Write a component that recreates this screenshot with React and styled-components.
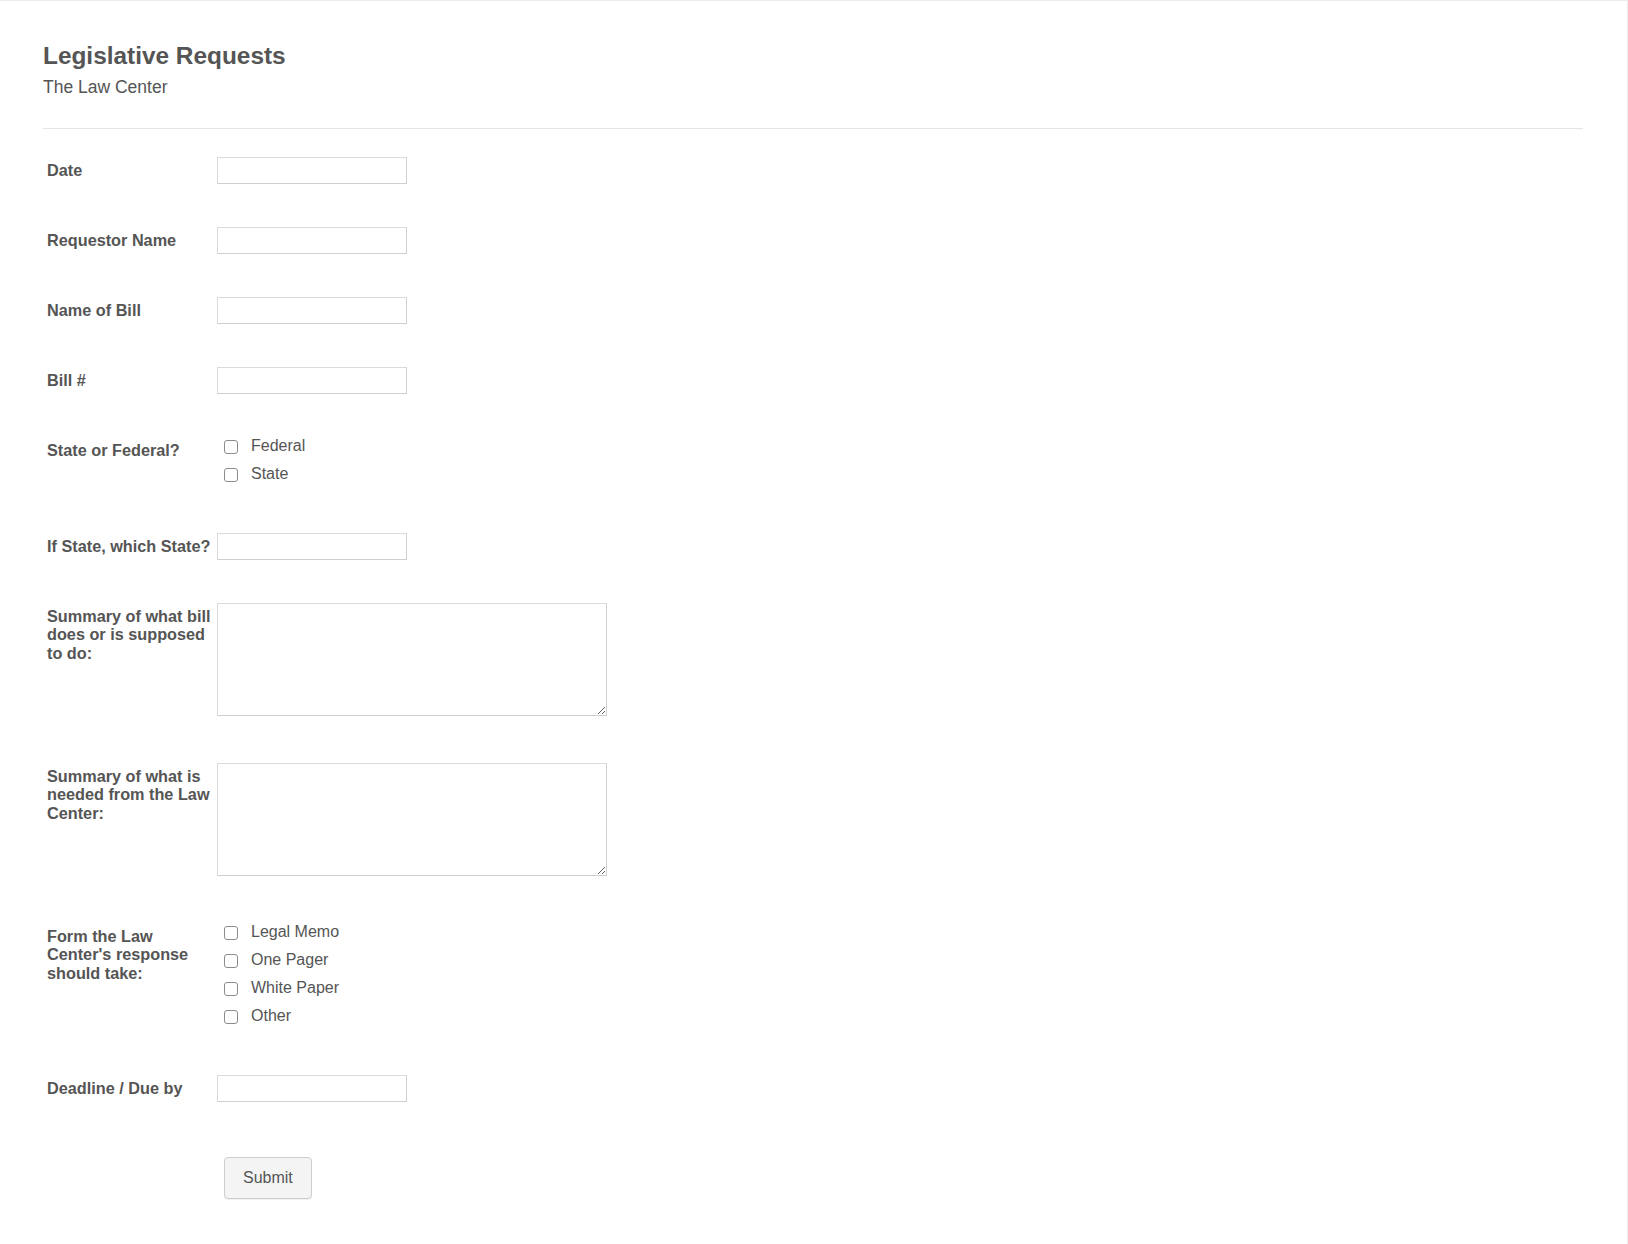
import React from 'react';
import styled, { createGlobalStyle } from 'styled-components';

const GlobalStyle = createGlobalStyle`
body{
    margin: 0;
    background: #fff;
    color: #555;
    font-family: "Liberation Sans", Arial, sans-serif;
}
`;

const fields = [
    { id: 'date', label: 'Date', kind: 'input' },
    { id: 'requestor', label: 'Requestor Name', kind: 'input' },
    { id: 'bill', label: 'Name of Bill', kind: 'input' },
    { id: 'billNo', label: 'Bill #', kind: 'input' },
    { id: 'scope', label: 'State or Federal?', kind: 'checks', options: ['Federal', 'State'] },
    { id: 'state', label: 'If State, which State?', kind: 'input' },
    { id: 'summary', label: 'Summary of what bill does or is supposed to do:', kind: 'textarea' },
    { id: 'needed', label: 'Summary of what is needed from the Law Center:', kind: 'textarea' },
    { id: 'form', label: "Form the Law Center's response should take:", kind: 'checks', options: ['Legal Memo', 'One Pager', 'White Paper', 'Other'] },
    { id: 'deadline', label: 'Deadline / Due by', kind: 'input' },
];

export default function App() {
    const renderControl = (f) => {
        if (f.kind === 'textarea') return <TextArea id={f.id} />;
        if (f.kind === 'checks') {
            return (
                <CheckList>
                    {f.options.map((opt) => (
                        <CheckOption key={opt}>
                            <CheckBox type="checkbox" />
                            <span>{opt}</span>
                        </CheckOption>
                    ))}
                </CheckList>
            );
        }
        return <TextInput id={f.id} type="text" />;
    };

    return (
        <>
            <GlobalStyle />
            <Page>
                <FormWrap>
                    <Header>
                        <h2>Legislative Requests</h2>
                        <div className="sub">The Law Center</div>
                    </Header>
                    <FieldList>
                        {fields.map((f) => (
                            <Row key={f.id}>
                                <Label htmlFor={f.id}>{f.label}</Label>
                                {renderControl(f)}
                            </Row>
                        ))}
                        <SubmitRow>
                            <SubmitButton type="button">Submit</SubmitButton>
                        </SubmitRow>
                    </FieldList>
                </FormWrap>
            </Page>
        </>
    );
}

const Page = styled.div`
min-height: 100vh;
box-sizing: border-box;
border-top: 1px solid #ebebeb;
border-right: 1px solid #ebebeb;
`;

const FormWrap = styled.div`
padding: 41px 44px 40px 43px;
`;

const Header = styled.div`
padding-bottom: 30px;
border-bottom: 1px solid #e4e4e4;
h2{
    margin: 0;
    font-size: 24.4px;
    font-weight: bold;
    line-height: normal;
    color: #555;
}
.sub{
    margin-top: 7px;
    font-size: 17.5px;
    line-height: normal;
    color: #555;
}
`;

const FieldList = styled.div`
padding-top: 28px;
`;

const Row = styled.div`
display: flex;
align-items: flex-start;
padding-left: 4px;
margin-bottom: 43px;
`;

const Label = styled.label`
width: 170px;
flex-shrink: 0;
padding-top: 4px;
font-size: 16.25px;
font-weight: bold;
line-height: 18.4px;
color: #555;
`;

const TextInput = styled.input`
box-sizing: border-box;
width: 190px;
height: 27px;
margin: 0;
border: 1px solid #cfcfcf;
border-top-color: #dadada;
border-left-color: #dadada;
background: #fff;
font: 15px "Liberation Sans", Arial, sans-serif;
outline: none;
`;

const TextArea = styled.textarea`
display: block;
box-sizing: border-box;
width: 390px;
height: 113px;
margin: 0 0 4px 0;
border: 1px solid #cfcfcf;
border-top-color: #dadada;
border-left-color: #dadada;
background: #fff;
font: 15px "Liberation Sans", Arial, sans-serif;
outline: none;
`;

const CheckList = styled.div`
display: flex;
flex-direction: column;
margin: 0 0 -3px 7px;
`;

const CheckOption = styled.label`
display: flex;
align-items: flex-start;
height: 28px;
font-size: 16px;
line-height: normal;
color: #555;
`;

const CheckBox = styled.input`
appearance: none;
box-sizing: border-box;
width: 14px;
height: 14px;
margin: 2.5px 13px 0 0;
border: 1px solid #8c8c8c;
border-radius: 3px;
background: #fff;
`;

const SubmitRow = styled.div`
padding: 12px 0 0 181px;
`;

const SubmitButton = styled.button`
box-sizing: border-box;
height: 42px;
padding: 0 18px;
border: 1px solid #cdcdcd;
border-radius: 4px;
background: #f4f4f4;
color: #555;
font: 16px "Liberation Sans", Arial, sans-serif;
box-shadow: 0 1px 1px rgba(0, 0, 0, 0.06);
`;
